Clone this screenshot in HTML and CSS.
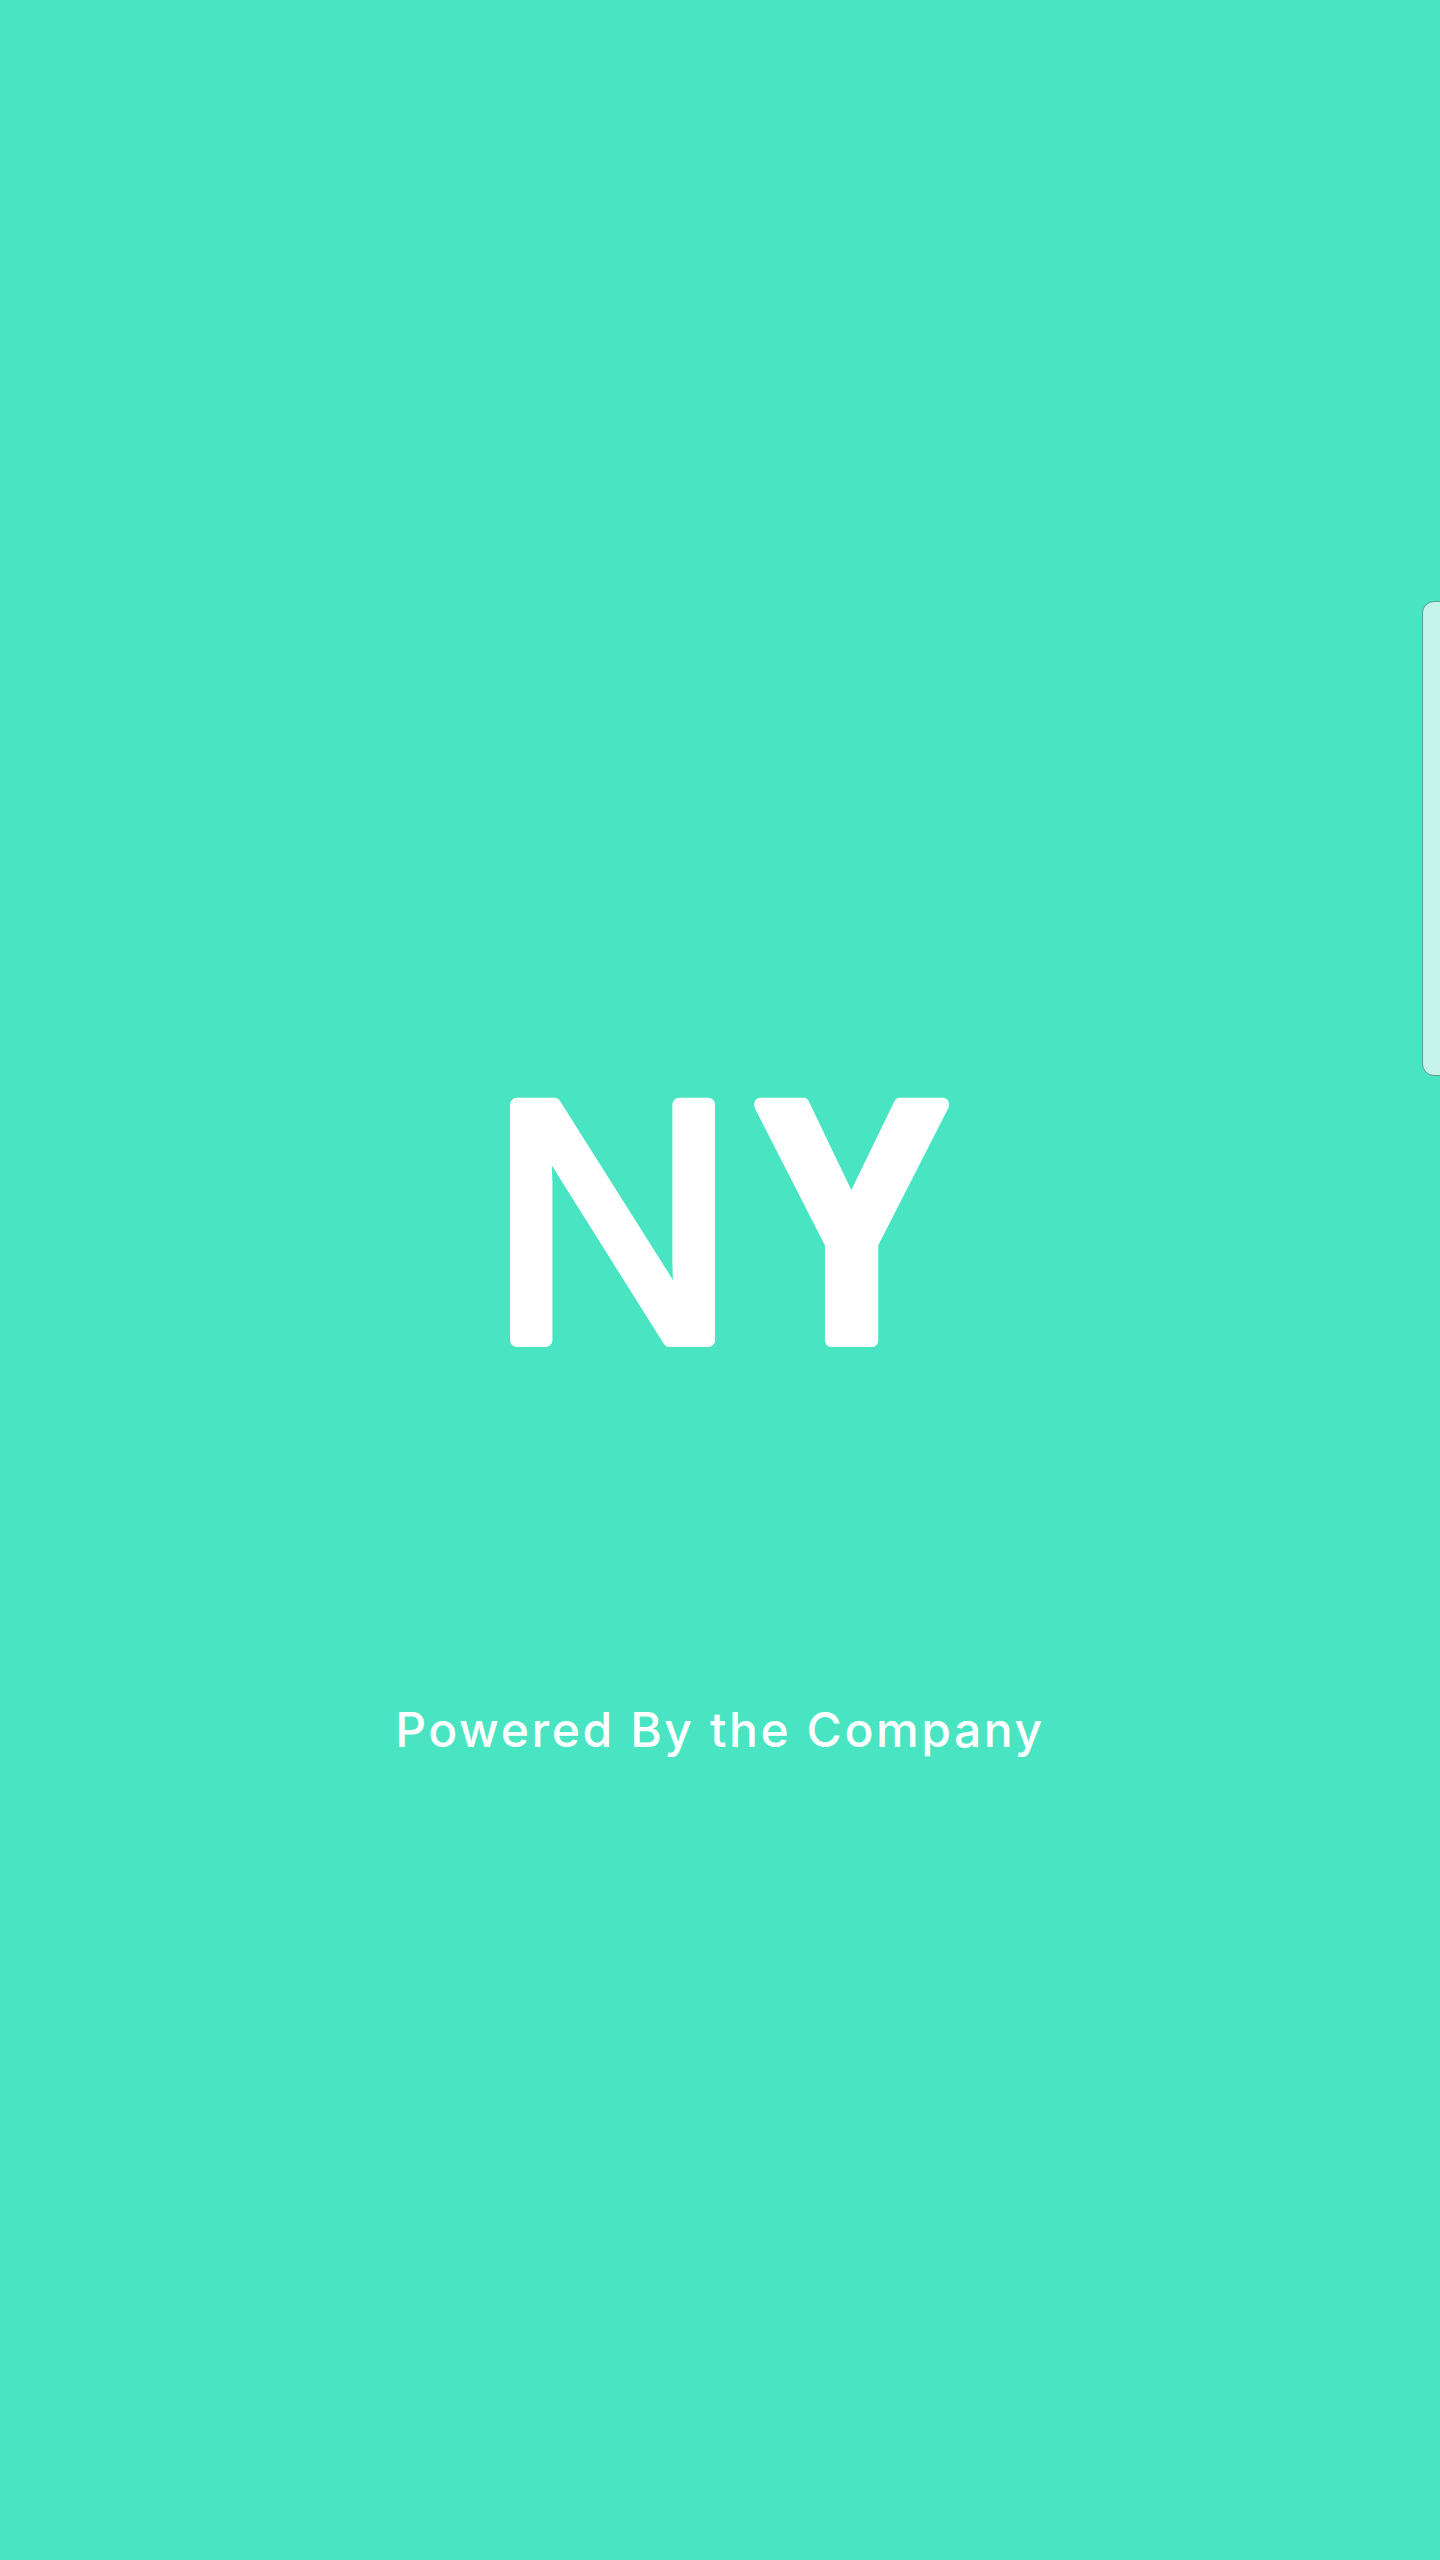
FILE: index.html
```html
<!DOCTYPE html>
<html lang="en">
<head>
<meta charset="utf-8">
<title>NY</title>
<link rel="stylesheet" href="styles.css">
</head>
<body>
<main class="screen">
  <svg class="logo" width="445" height="260" viewBox="0 0 445 260" role="img" aria-label="NY">
    <text class="logo-n" x="-19" y="252">N</text>
    <text class="logo-y" x="292.4" y="252" transform="scale(0.845 1)">Y</text>
  </svg>
  <div class="powered">Powered By the Company</div>
  <div class="side-tab"></div>
</main>
</body>
</html>
```
FILE: styles.css
```css
html, body {
  margin: 0;
  padding: 0;
  background: #49e5c3;
}
.screen {
  position: relative;
  width: 1440px;
  height: 2560px;
  overflow: hidden;
  display: flex;
  flex-direction: column;
  align-items: center;
  padding-top: 1088px;
  box-sizing: border-box;
  background: #49e5c3;
}
.logo {
  display: block;
  margin-left: 21px;
  overflow: visible;
}
.logo text {
  font-family: "Liberation Sans", Arial, sans-serif;
  font-size: 342px;
  fill: #ffffff;
  stroke: #ffffff;
  stroke-width: 14px;
  stroke-linejoin: round;
  stroke-linecap: round;
}
.logo-n {
  font-weight: 400;
}
.logo-y {
  font-weight: 700;
}
.powered {
  margin-top: 358px;
  font-family: Inter, "Open Sans", sans-serif;
  font-weight: 500;
  font-size: 48px;
  line-height: 1;
  letter-spacing: 2.6px;
  color: #ffffff;
}
.side-tab {
  position: absolute;
  top: 601px;
  left: 1422px;
  width: 60px;
  height: 475px;
  border: 1.5px solid #5e9c92;
  border-radius: 12px;
  background: #c5f3e9;
  box-sizing: border-box;
}
```
